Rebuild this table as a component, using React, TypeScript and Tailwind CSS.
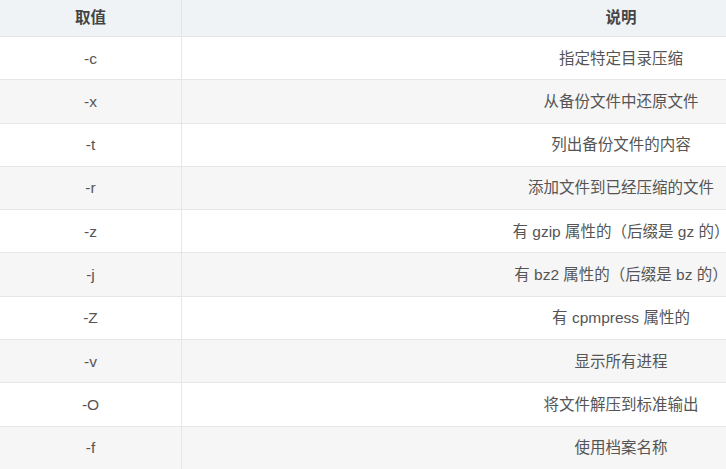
const rows = [
  ['-c', '指定特定目录压缩'],
  ['-x', '从备份文件中还原文件'],
  ['-t', '列出备份文件的内容'],
  ['-r', '添加文件到已经压缩的文件'],
  ['-z', '有 gzip 属性的（后缀是 gz 的）'],
  ['-j', '有 bz2 属性的（后缀是 bz 的）'],
  ['-Z', '有 cpmpress 属性的'],
  ['-v', '显示所有进程'],
  ['-O', '将文件解压到标准输出'],
  ['-f', '使用档案名称'],
]

export default function App() {
  return (
    <div className="w-[726px] h-[469px] overflow-hidden bg-white font-['Liberation_Sans','Noto_Sans_CJK_SC',sans-serif] text-[15.5px] text-[#555]">
      <div className="w-[1060px]">
        {/* 表头 */}
        <div className="flex h-[37px] bg-[#eff3f6] border-b border-[#e2e5e8] font-bold text-[#444]">
          <div className="w-[182px] border-r border-[#e2e5e8] flex items-center justify-center">取值</div>
          <div className="flex-1 flex items-center justify-center">说明</div>
        </div>

        {rows.map(([opt, desc], i) => (
          <div
            key={opt}
            className={`flex h-[43.3px] border-b border-[#e6e6e6] ${i % 2 === 1 ? 'bg-[#f6f6f6]' : 'bg-white'}`}
          >
            <div className="w-[182px] border-r border-[#e6e6e6] flex items-center justify-center">{opt}</div>
            <div className="flex-1 flex items-center justify-center">{desc}</div>
          </div>
        ))}
      </div>
    </div>
  )
}
